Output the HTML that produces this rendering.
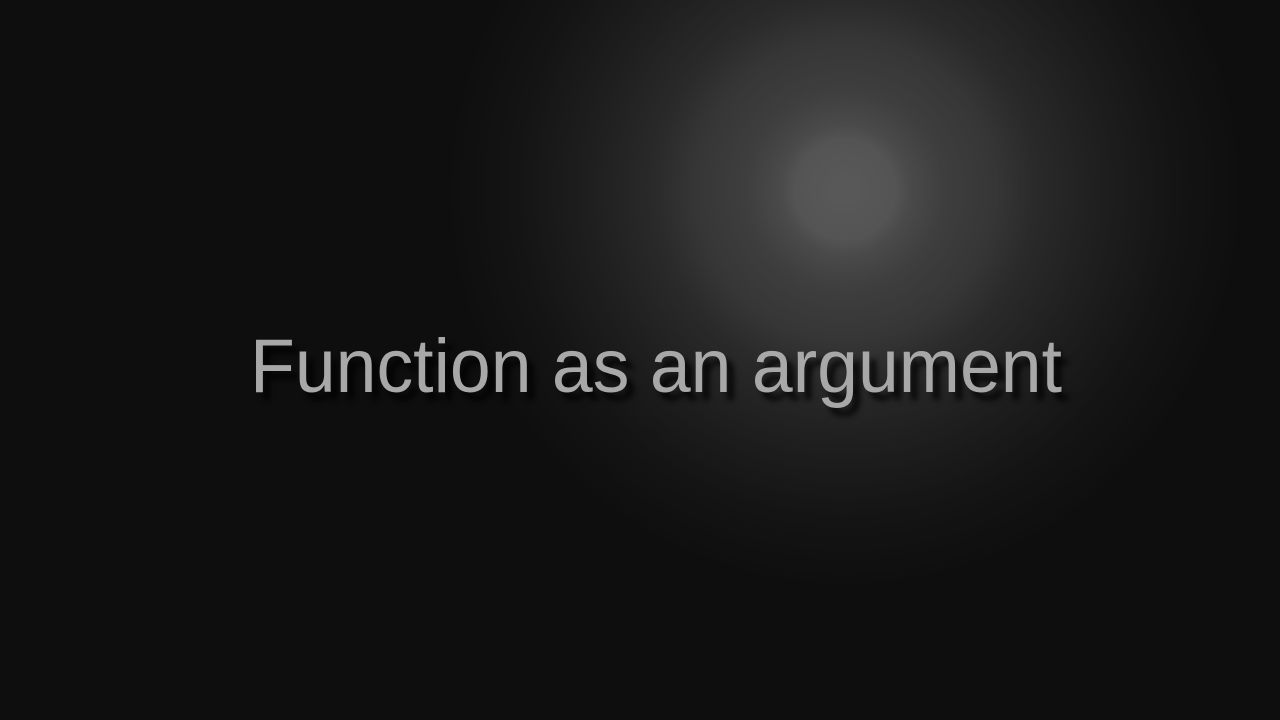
<!DOCTYPE html>
<html><head><meta charset="utf-8"><style>
html,body{margin:0;padding:0;width:1280px;height:720px;overflow:hidden;background:#0e0e0e}
.bg{position:absolute;inset:0;background:
radial-gradient(circle at 845px 190px,#595959 0px,#545454 50px,#4a4a4a 65px,#3e3e3e 100px,#363636 150px,#2a2a2a 190px,#1e1e1e 260px,#141414 330px,#0e0e0e 400px,#0e0e0e 100%);}
svg{position:absolute;left:0;top:0}
</style></head><body>
<div class="bg"></div>
<svg width="1280" height="720">
<defs><filter id="s" x="-10%" y="-50%" width="120%" height="200%"><feGaussianBlur stdDeviation="3"/></filter></defs>
<text x="257" y="400" textLength="812" lengthAdjust="spacingAndGlyphs" font-family="Liberation Sans, sans-serif" font-size="76" fill="#000" opacity="0.8" filter="url(#s)">Function as an argument</text>
<text x="250" y="392" textLength="812" lengthAdjust="spacingAndGlyphs" font-family="Liberation Sans, sans-serif" font-size="76" fill="#a8a8a8">Function as an argument</text>
</svg>
</body></html>
